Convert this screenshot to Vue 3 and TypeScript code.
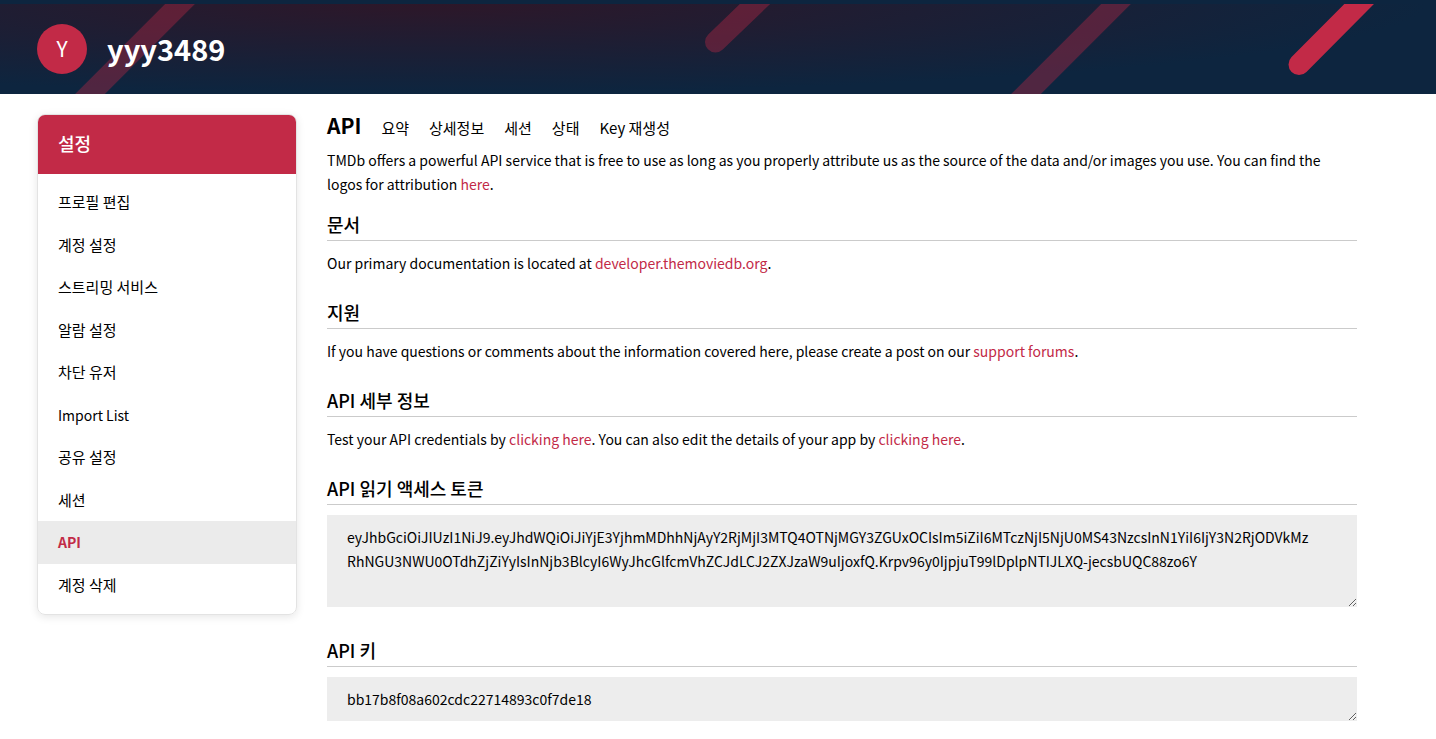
<script setup lang="ts">
import { ref } from 'vue'

interface MenuItem {
  label: string
  latin?: boolean
  active?: boolean
}

const menu: MenuItem[] = [
  { label: '프로필 편집' },
  { label: '계정 설정' },
  { label: '스트리밍 서비스' },
  { label: '알람 설정' },
  { label: '차단 유저' },
  { label: 'Import List', latin: true },
  { label: '공유 설정' },
  { label: '세션' },
  { label: 'API', latin: true, active: true },
  { label: '계정 삭제' },
]

const tabs: string[] = ['요약', '상세정보', '세션', '상태', 'Key 재생성']

const token = ref(
  'eyJhbGciOiJIUzI1NiJ9.eyJhdWQiOiJiYjE3YjhmMDhhNjAyY2RjMjI3MTQ4OTNjMGY3ZGUxOCIsIm5iZiI6MTczNjI5NjU0MS43NzcsInN1YiI6IjY3N2RjODVkMzRhNGU3NWU0OTdhZjZiYyIsInNjb3BlcyI6WyJhcGlfcmVhZCJdLCJ2ZXJzaW9uIjoxfQ.Krpv96y0IjpjuT99lDplpNTIJLXQ-jecsbUQC88zo6Y',
)
const apiKey = ref('bb17b8f08a602cdc22714893c0f7de18')
</script>

<template>
  <div class="page">
    <header class="hero">
      <svg class="stripes" viewBox="0 0 1436 90" preserveAspectRatio="xMidYMid slice" aria-hidden="true">
        <g stroke="#c22a47" stroke-width="21" stroke-linecap="round">
          <path d="M200 -20L70 110" opacity=".37" />
          <path d="M781 -25L715.5 38" opacity=".37" />
          <path d="M1136 -20L1006 110" opacity=".37" />
          <path d="M1384 -25L1299 60.500" />
        </g>
      </svg>
      <a class="avatar" href="#">Y</a>
      <h1><a href="#">yyy3489</a></h1>
    </header>

    <div class="columns">
      <aside class="panel">
        <h2>설정</h2>
        <ul>
          <li v-for="item in menu" :key="item.label" :class="{ active: item.active, latin: item.latin }">
            <a href="#">{{ item.label }}</a>
          </li>
        </ul>
      </aside>

      <main>
        <div class="title">
          <h2>API</h2>
          <nav>
            <a v-for="tab in tabs" :key="tab" href="#">{{ tab }}</a>
          </nav>
        </div>
        <p class="intro">
          TMDb offers a powerful API service that is free to use as long as you properly attribute us as the source of
          the data and/or images you use. You can find the logos for attribution <a href="#">here</a>.
        </p>

        <section>
          <h3>문서</h3>
          <p>Our primary documentation is located at <a href="#">developer.themoviedb.org</a>.</p>
        </section>
        <section>
          <h3>지원</h3>
          <p>
            If you have questions or comments about the information covered here, please create a post on our
            <a href="#">support forums</a>.
          </p>
        </section>
        <section>
          <h3>API 세부 정보</h3>
          <p>
            Test your API credentials by <a href="#">clicking here</a>. You can also edit the details of your app by
            <a href="#">clicking here</a>.
          </p>
        </section>
        <section class="field">
          <h3><label for="token">API 읽기 액세스 토큰</label></h3>
          <textarea id="token" v-model="token" rows="3" readonly spellcheck="false"></textarea>
        </section>
        <section class="field">
          <h3><label for="key">API 키</label></h3>
          <textarea id="key" v-model="apiKey" rows="1" readonly spellcheck="false"></textarea>
        </section>
      </main>
    </div>
  </div>
</template>

<style>
html {
  overflow: hidden;
}
body {
  margin: 0;
  background: #fff;
}
</style>

<style scoped>
.page,
textarea {
  font-family: 'Noto Sans CJK KR', 'Noto Sans', sans-serif;
  font-size: 14px;
  line-height: 24px;
  color: #000;
}
.page * {
  box-sizing: border-box;
}
h1,
h2,
h3,
p,
ul {
  margin: 0;
  padding: 0;
}
a {
  color: #c22a47;
  text-decoration: none;
}
.hero {
  position: relative;
  display: flex;
  align-items: center;
  gap: 20px;
  height: 94px;
  padding: 0 37px;
  border-top: 4px solid #0d253f;
  overflow: hidden;
  background: radial-gradient(at 30% top, #2d1729 0%, #0d253f 70%) padding-box;
}
.stripes {
  position: absolute;
  inset: 0;
  width: 100%;
  height: 100%;
  fill: none;
}
.avatar {
  position: relative;
  width: 50px;
  height: 50px;
  border-radius: 50%;
  background: #c22a47;
  color: #fff;
  font-size: 21px;
  font-weight: 400;
  line-height: 48px;
  text-align: center;
}
h1 {
  position: relative;
  padding-bottom: 2px;
  font-size: 29px;
  line-height: 40px;
}
h1 a {
  color: #fff;
}
.columns {
  display: grid;
  grid-template-columns: 260px minmax(0, 1fr);
  gap: 30px;
  align-items: start;
  padding: 20px 79px 18px 37px;
}
.panel {
  border: 1px solid #e3e3e3;
  border-radius: 8px;
  overflow: hidden;
  box-shadow: 0 2px 8px rgba(0, 0, 0, 0.1);
}
.panel h2 {
  padding: 0 20px 2px;
  background: #c22a47;
  color: #fff;
  font-size: 18px;
  font-weight: 500;
  line-height: 57px;
}
.panel ul {
  display: grid;
  grid-auto-rows: 1fr;
  min-height: 440px;
  padding: 7px 0 8px;
  list-style: none;
}
.panel li {
  display: flex;
  font-size: 15px;
}
.panel li.latin {
  font-size: 14px;
}
.panel li a {
  flex: 1;
  align-self: center;
  padding: 0 20px;
  color: #000;
}
.panel li.active {
  background: #ebebeb;
}
.panel li.active a {
  color: #c22a47;
  font-weight: 700;
}
.title {
  display: flex;
  align-items: baseline;
  gap: 20px;
  margin-bottom: 9px;
  line-height: 22px;
}
.title h2 {
  font-size: 21px;
}
nav {
  display: flex;
  gap: 20px;
  font-size: 15px;
}
nav a {
  color: #000;
}
.intro {
  margin-bottom: 16px;
}
section {
  margin-bottom: 25px;
}
h3 {
  margin-bottom: 10px;
  padding-bottom: 4px;
  border-bottom: 1px solid #cbcbcb;
  font-size: 18px;
  font-weight: 500;
  line-height: 24px;
}
.field {
  margin-bottom: 31px;
}
textarea {
  display: block;
  width: 100%;
  margin: 0;
  padding: 10px 44px 10px 20px;
  border: 0;
  border-radius: 0;
  background: #ededed;
  outline: 0;
  resize: vertical;
  overflow: hidden;
  word-break: break-all;
}
</style>
